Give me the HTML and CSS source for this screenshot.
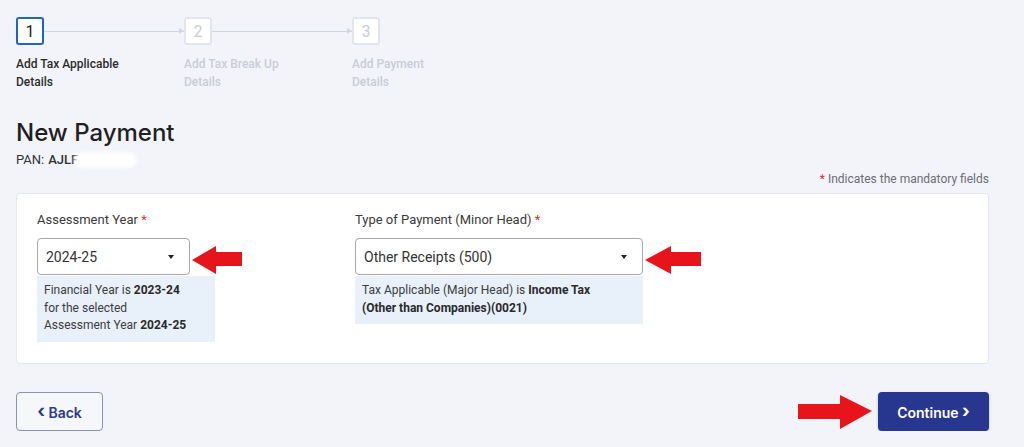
FILE: index.html
```html
<!DOCTYPE html>
<html lang="en">

<head>
	<meta charset="UTF-8">
	<meta name="viewport" content="width=device-width, initial-scale=1.0">
	<title>New Payment</title>
	<link rel="stylesheet" href="styles.css">
</head>

<body>
	<div class="page">
		<!-- Stepper -->
		<div class="stepper">
			<div class="step active">
				<div class="step-head">
					<div class="step-num">1</div>
					<div class="step-line"></div>
				</div>
				<div class="step-label">Add Tax Applicable<br>Details</div>
			</div>
			<div class="step">
				<div class="step-head">
					<div class="step-num">2</div>
					<div class="step-line"></div>
				</div>
				<div class="step-label">Add Tax Break Up<br>Details</div>
			</div>
			<div class="step last">
				<div class="step-head">
					<div class="step-num">3</div>
				</div>
				<div class="step-label">Add Payment<br>Details</div>
			</div>
		</div>

		<h1 class="title">New Payment</h1>
		<div class="pan">PAN: <b>AJLF</b><span class="pan-mask"></span></div>

		<div class="mandatory"><span class="req">*</span> Indicates the mandatory fields</div>

		<div class="card">
			<div class="field field-ay">
				<label>Assessment Year <span class="req">*</span></label>
				<div class="select-row">
					<div class="select select-ay">
						<span>2024-25</span>
						<span class="caret"></span>
					</div>
					<svg class="pointer" width="50" height="28" viewBox="0 0 50 28">
						<polygon points="0,14 24,0 24,6 50,6 50,20 24,20 24,28" fill="#e8141b" />
					</svg>
				</div>
				<div class="info info-ay">
					Financial Year is <b>2023-24</b><br>
					for the selected<br>
					Assessment Year <b>2024-25</b>
				</div>
			</div>
			<div class="field field-type">
				<label>Type of Payment (Minor Head) <span class="req">*</span></label>
				<div class="select-row">
					<div class="select select-type">
						<span>Other Receipts (500)</span>
						<span class="caret"></span>
					</div>
					<svg class="pointer" width="56" height="28" viewBox="0 0 56 28">
						<polygon points="0,14 26,0 26,6 56,6 56,20 26,20 26,28" fill="#e8141b" />
					</svg>
				</div>
				<div class="info info-type">
					Tax Applicable (Major Head) is <b>Income Tax</b><br>
					<b>(Other than Companies)(0021)</b>
				</div>
			</div>
		</div>

		<div class="actions">
			<button class="btn btn-back"><span class="chev">&lsaquo;</span> Back</button>
			<div class="actions-right">
				<svg class="pointer-right" width="74" height="34" viewBox="0 0 74 34">
					<polygon points="74,16 42,0 42,9 0,9 0,24 42,24 42,34" fill="#e8141b" />
				</svg>
				<button class="btn btn-continue">Continue <span class="chev">&rsaquo;</span></button>
			</div>
		</div>
	</div>
</body>

</html>
```

FILE: styles.css
```css
/* Base reset */
* {
	margin: 0;
	padding: 0;
	box-sizing: border-box;
}

body {
	background: #f3f4f9;
	font-family: Roboto, 'Liberation Sans', sans-serif;
	color: #333;
}

.page {
	padding: 17px 35px 0 16px;
}

/* Stepper */
.stepper {
	display: flex;
}

.step {
	width: 168px;
}

.step-head {
	display: flex;
	align-items: center;
}

.step-num {
	width: 28px;
	height: 28px;
	border: 2px solid #e2e5ee;
	border-radius: 3px;
	background: #fff;
	display: flex;
	align-items: center;
	justify-content: center;
	font-size: 16px;
	color: #c9cdd8;
}

.step.active .step-num {
	border-color: #1f66c1;
	color: #222;
}

.step-line {
	flex: 1;
	height: 1px;
	background: #cfd6e4;
	position: relative;
}

.step-line::after {
	content: '';
	position: absolute;
	right: 0;
	top: -3px;
	border-left: 5px solid #cfd6e4;
	border-top: 3.5px solid transparent;
	border-bottom: 3.5px solid transparent;
}

.step-label {
	margin-top: 10px;
	font-size: 12px;
	line-height: 18px;
	font-weight: 500;
	color: #c9cdd6;
}

.step.active .step-label {
	color: #2b2b2b;
}

/* Heading */
.title {
	margin-top: 28px;
	font-family: Inter, Roboto, sans-serif;
	font-size: 24px;
	line-height: 28px;
	font-weight: 500;
	color: #1f1f24;
}

.pan {
	margin-top: 5px;
	font-size: 13px;
	line-height: 16px;
	color: #333;
	display: flex;
	align-items: center;
}

.pan b {
	font-weight: 500;
	margin-left: 4px;
}

.pan-mask {
	width: 62px;
	height: 14px;
	background: #fff;
	border-radius: 7px;
	margin-left: -4px;
	filter: blur(2px);
}

.mandatory {
	margin-top: 3px;
	text-align: right;
	font-size: 12px;
	line-height: 16px;
	color: #6b6e76;
}

.req {
	color: #d9323a;
}

/* Card */
.card {
	margin-top: 6px;
	background: #fff;
	border: 1px solid #e3e6ed;
	border-radius: 4px;
	padding: 18px 20px 20px 20px;
	height: 171px;
	display: flex;
}

.field label {
	display: block;
	font-size: 13px;
	line-height: 16px;
	color: #3a3a3a;
}

.field-ay {
	width: 318px;
}

.select-row {
	display: flex;
	align-items: center;
	margin-top: 10px;
}

.select {
	height: 37px;
	border: 1px solid #a5a8b0;
	border-radius: 4px;
	background: #fff;
	display: flex;
	align-items: center;
	justify-content: space-between;
	padding: 0 15px 0 8px;
	font-size: 14px;
	color: #333;
}

.select-ay {
	width: 153px;
}

.select-type {
	width: 288px;
}

.caret {
	border-top: 4px solid #222;
	border-left: 3.5px solid transparent;
	border-right: 3.5px solid transparent;
}

.pointer {
	margin-left: 2px;
	margin-top: 6px;
}

.info {
	margin-top: 1px;
	background: #e8f0fa;
	padding: 6px 7px 7px 7px;
	font-size: 12px;
	line-height: 17.5px;
	color: #3c3c3c;
}

.info b {
	font-weight: 700;
	color: #2a2a2a;
}

.info-ay {
	width: 178px;
}

.info-type {
	width: 288px;
}

/* Actions */
.actions {
	margin-top: 28px;
	display: flex;
	justify-content: space-between;
	align-items: center;
}

.actions-right {
	display: flex;
	align-items: center;
}

.pointer-right {
	margin-right: 6px;
}

.btn {
	height: 39px;
	border-radius: 4px;
	font-family: Inter, Roboto, sans-serif;
	font-size: 14px;
	font-weight: 600;
	cursor: pointer;
}

.btn .chev {
	font-size: 18px;
	font-weight: 700;
	line-height: 1;
	vertical-align: 1px;
}

.btn-back {
	width: 87px;
	background: #f6f7fb;
	border: 1px solid #8a93b1;
	color: #2d3a86;
}

.btn-continue {
	width: 111px;
	background: #27368e;
	border: none;
	color: #fff;
	box-shadow: 0 1px 3px rgba(0, 0, 0, 0.2);
}
```
